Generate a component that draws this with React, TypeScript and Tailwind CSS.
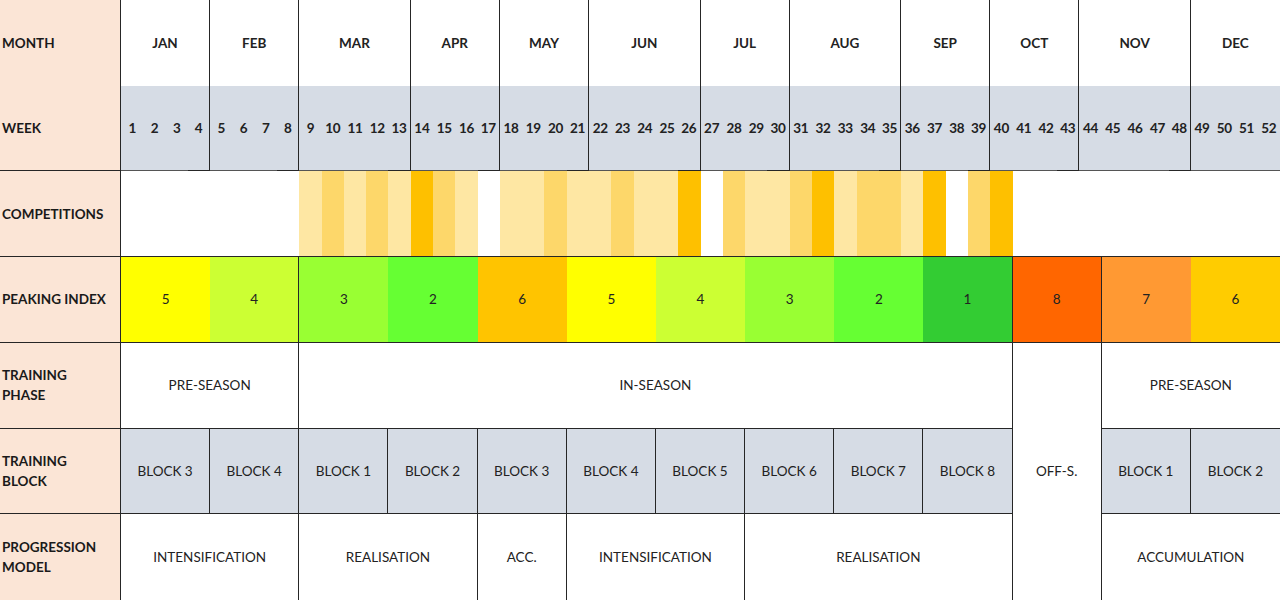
const LINE = "border-[#262626]";

const MONTHS: { name: string; span: string }[] = [
  { name: "JAN", span: "col-span-4" },
  { name: "FEB", span: "col-span-4" },
  { name: "MAR", span: "col-span-5" },
  { name: "APR", span: "col-span-4" },
  { name: "MAY", span: "col-span-4" },
  { name: "JUN", span: "col-span-5" },
  { name: "JUL", span: "col-span-4" },
  { name: "AUG", span: "col-span-5" },
  { name: "SEP", span: "col-span-4" },
  { name: "OCT", span: "col-span-4" },
  { name: "NOV", span: "col-span-5" },
  { name: "DEC", span: "col-span-4" },
];

// last week of every month gets the divider
const MONTH_ENDS = [4, 8, 13, 17, 21, 26, 30, 35, 39, 43, 48];

// w = white, l = lightest, m = medium, d = gold
const COMP = "wwwwwwwwlmlmldmlwllmllmlldwmllmdlmmldwmdwwwwwwwwwwww";
const COMP_BG: Record<string, string> = {
  w: "bg-white",
  l: "bg-[#fee7a3]",
  m: "bg-[#fdd76a]",
  d: "bg-[#fec000]",
};

const PEAKS: { v: number; bg: string; edge?: boolean }[] = [
  { v: 5, bg: "bg-[#ffff00]" },
  { v: 4, bg: "bg-[#ccff33]", edge: true },
  { v: 3, bg: "bg-[#99ff33]" },
  { v: 2, bg: "bg-[#66ff33]" },
  { v: 6, bg: "bg-[#ffc400]" },
  { v: 5, bg: "bg-[#ffff00]" },
  { v: 4, bg: "bg-[#ccff33]" },
  { v: 3, bg: "bg-[#99ff33]" },
  { v: 2, bg: "bg-[#66ff33]" },
  { v: 1, bg: "bg-[#33cc33]", edge: true },
  { v: 8, bg: "bg-[#ff6600]", edge: true },
  { v: 7, bg: "bg-[#ff9933]" },
  { v: 6, bg: "bg-[#ffcc00]" },
];

const BLOCKS_A = ["BLOCK 3", "BLOCK 4", "BLOCK 1", "BLOCK 2", "BLOCK 3", "BLOCK 4", "BLOCK 5", "BLOCK 6", "BLOCK 7", "BLOCK 8"];

const PROGRESSION: { label: string; span: string }[] = [
  { label: "INTENSIFICATION", span: "col-span-8" },
  { label: "REALISATION", span: "col-span-8" },
  { label: "ACC.", span: "col-span-4" },
  { label: "INTENSIFICATION", span: "col-span-8" },
  { label: "REALISATION", span: "col-span-12" },
];

function RowLabel({ lines, last }: { lines: string[]; last?: boolean }) {
  return (
    <div
      className={`bg-[#fbe5d6] border-r ${LINE} ${last ? "" : "border-b"} flex flex-col justify-center pl-[2px] text-[13.5px] font-bold leading-[20px] text-[#1a1a1a]`}
    >
      {lines.map((l) => (
        <span key={l}>{l}</span>
      ))}
    </div>
  );
}

function Cell({ children, className }: { children?: React.ReactNode; className: string }) {
  return (
    <div className={`flex items-center justify-center text-[13.5px] text-[#222] ${className}`}>
      {children}
    </div>
  );
}

export default function App() {
  return (
    <div className="w-[1280px] h-[600px] bg-white font-['Lato','Open_Sans',sans-serif] overflow-hidden">
      <div className="grid h-full grid-cols-[121px_repeat(52,minmax(0,1fr))] grid-rows-[repeat(7,minmax(0,1fr))]">
        {/* month */}
        <div className={`bg-[#fbe5d6] border-r ${LINE} flex items-center pl-[2px] text-[13.5px] font-bold text-[#1a1a1a]`}>
          MONTH
        </div>
        {MONTHS.map((m, i) => (
          <Cell
            key={m.name}
            className={`${m.span} font-bold text-[#111] ${i < 11 ? `border-r ${LINE}` : ""}`}
          >
            {m.name}
          </Cell>
        ))}

        {/* week */}
        <div className={`bg-[#fbe5d6] border-r border-b ${LINE} flex items-center pl-[2px] text-[13.5px] font-bold text-[#1a1a1a]`}>
          WEEK
        </div>
        {Array.from({ length: 52 }, (_, i) => i + 1).map((w) => (
          <Cell
            key={w}
            className={`bg-[#d6dce5] border-b border-[#555] font-bold text-[#111] tracking-[-0.3px] ${MONTH_ENDS.includes(w) ? `border-r ${LINE}` : ""}`}
          >
            {w}
          </Cell>
        ))}

        {/* competitions */}
        <RowLabel lines={["COMPETITIONS"]} />
        {COMP.split("").map((c, i) => (
          <div key={i} className={`${COMP_BG[c]} border-b ${LINE}`} />
        ))}

        {/* peaking index */}
        <RowLabel lines={["PEAKING INDEX"]} />
        {PEAKS.map((p, i) => (
          <Cell key={i} className={`col-span-4 ${p.bg} border-b ${LINE} ${p.edge ? `border-r ${LINE}` : ""}`}>
            {p.v}
          </Cell>
        ))}

        {/* training phase */}
        <RowLabel lines={["TRAINING", "PHASE"]} />
        <Cell className={`col-span-8 border-r border-b ${LINE}`}>PRE-SEASON</Cell>
        <Cell className={`col-span-32 border-r border-b ${LINE}`}>IN-SEASON</Cell>
        <Cell className={`col-span-4 row-span-3 border-r ${LINE}`}>OFF-S.</Cell>
        <Cell className={`col-span-8 border-b ${LINE}`}>PRE-SEASON</Cell>

        {/* training block */}
        <RowLabel lines={["TRAINING", "BLOCK"]} />
        {BLOCKS_A.map((b, i) => (
          <Cell key={i} className={`col-span-4 bg-[#d6dce5] border-r border-b ${LINE}`}>
            {b}
          </Cell>
        ))}
        <Cell className={`col-span-4 bg-[#d6dce5] border-r border-b ${LINE}`}>BLOCK 1</Cell>
        <Cell className={`col-span-4 bg-[#d6dce5] border-b ${LINE}`}>BLOCK 2</Cell>

        {/* progression model */}
        <RowLabel lines={["PROGRESSION", "MODEL"]} last />
        {PROGRESSION.map((p, i) => (
          <Cell key={i} className={`${p.span} border-r ${LINE}`}>
            {p.label}
          </Cell>
        ))}
        <Cell className="col-span-8">ACCUMULATION</Cell>
      </div>
    </div>
  );
}
